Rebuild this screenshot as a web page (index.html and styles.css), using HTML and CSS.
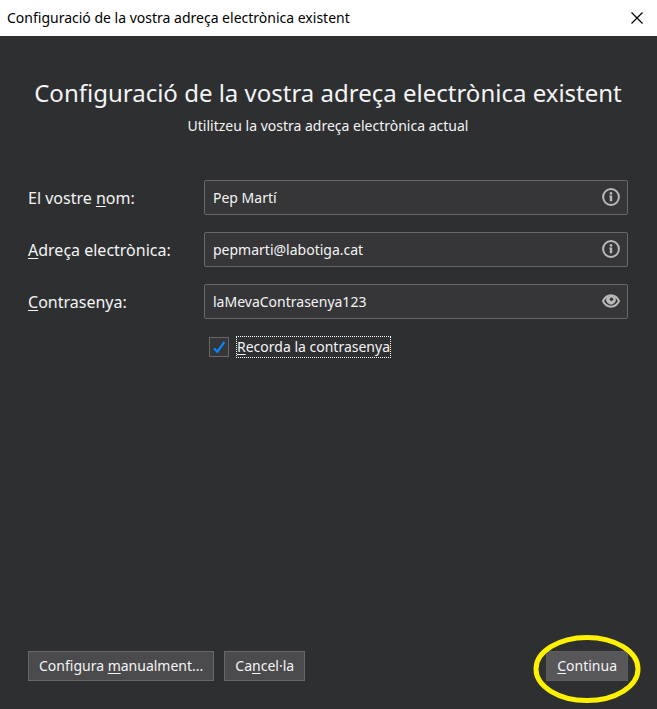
FILE: index.html
```html
<!DOCTYPE html>
<html lang="ca">
<head>
<meta charset="utf-8">
<meta name="viewport" content="width=device-width, initial-scale=1">
<title>Configuració de la vostra adreça electrònica existent</title>
<link rel="stylesheet" href="styles.css">
</head>
<body>
<header class="titlebar">
  <span>Configuració de la vostra adreça electrònica existent</span>
  <button class="close" type="button" aria-label="Tanca">
    <svg width="12" height="12" viewBox="0 0 12 12"><path d="M.5.5l11 11M11.5.5l-11 11" stroke="#000" stroke-width="1.2"/></svg>
  </button>
</header>
<main class="dialog">
  <h1>Configuració de la vostra adreça electrònica existent</h1>
  <p class="subtitle">Utilitzeu la vostra adreça electrònica actual</p>
  <form class="form" id="account">
    <label for="name">El vostre <u>n</u>om:</label>
    <div class="field">
      <input id="name" type="text" value="Pep Martí">
      <svg class="icon" viewBox="0 0 18 18"><circle cx="9" cy="9" r="7.9" fill="none" stroke="#b9b9ba" stroke-width="2"/><circle cx="9" cy="5.4" r="1.3" fill="#b9b9ba"/><path d="M7.3 7.5h2.9v5.7H7.8V8.800h-.5z" fill="#b9b9ba"/></svg>
    </div>
    <label for="email"><u>A</u>dreça electrònica:</label>
    <div class="field">
      <input id="email" type="text" value="pepmarti@labotiga.cat">
      <svg class="icon" viewBox="0 0 18 18"><circle cx="9" cy="9" r="7.9" fill="none" stroke="#b9b9ba" stroke-width="2"/><circle cx="9" cy="5.4" r="1.3" fill="#b9b9ba"/><path d="M7.3 7.5h2.9v5.7H7.8V8.800h-.5z" fill="#b9b9ba"/></svg>
    </div>
    <label for="password"><u>C</u>ontrasenya:</label>
    <div class="field">
      <input id="password" type="text" value="laMevaContrasenya123">
      <svg class="icon" viewBox="0 0 18 18"><path d="M1 9C3 5 6 3.300 9 3.300S15 5 17 9c-2 4-5 5.700-8 5.700S3 13 1 9z" fill="none" stroke="#b9b9ba" stroke-width="2" stroke-linejoin="round"/><path d="M5 5a4.800 4.800 0 1 0 8 0L9 3.500z" fill="#b9b9ba"/><circle cx="9.500" cy="7.300" r="1.700" fill="#363638"/></svg>
    </div>
    <div class="remember">
      <input id="remember" type="checkbox" checked>
      <svg class="tick" viewBox="0 0 20 20"><path d="M5 11.200l3.300 3.600L15.400 5" fill="none" stroke="#0a84ff" stroke-width="2.200"/></svg>
      <label for="remember"><u>R</u>ecorda la contrasenya</label>
    </div>
  </form>
  <footer class="actions">
    <button type="button">Configura <u>m</u>anualment...</button>
    <button type="button">Ca<u>n</u>cel·la</button>
    <div class="primary">
      <button type="submit" form="account"><u>C</u>ontinua</button>
      <svg class="ring" viewBox="0 0 108 70"><ellipse cx="54" cy="35" rx="51" ry="31.500" fill="none" stroke="#fff200" stroke-width="5"/></svg>
    </div>
  </footer>
</main>
</body>
</html>
```
FILE: styles.css
```css
* { box-sizing: border-box; }

body {
  margin: 0;
  min-height: 100vh;
  display: flex;
  flex-direction: column;
  background: #2e2f31;
  color: #f4f4f5;
  font: 14px/20px "Segoe UI", "Noto Sans", "Open Sans", sans-serif;
}

button, input { font: inherit; color: inherit; }

u { text-decoration: underline; text-decoration-thickness: 1px; text-underline-offset: 2px; }

.titlebar {
  height: 36px;
  padding-left: 7px;
  display: flex;
  align-items: center;
  justify-content: space-between;
  background: #fff;
  color: #000;
}

.close {
  width: 40px;
  height: 36px;
  padding: 0;
  border: 0;
  background: none;
  display: grid;
  place-items: center;
}

.dialog {
  flex: 1;
  display: flex;
  flex-direction: column;
  padding: 39px 29px 28px 28px;
}

h1 {
  margin: 0;
  font-size: 24px;
  line-height: 36px;
  font-weight: 400;
  text-align: center;
  white-space: nowrap;
}

.subtitle { margin: 5px 0 44px; text-align: center; }

.form {
  display: grid;
  grid-template-columns: 176px 1fr;
  row-gap: 17px;
  align-items: center;
}

.form > label { font-size: 16px; }

.field { position: relative; }

.field input {
  display: block;
  width: 100%;
  height: 35px;
  padding: 0 36px 0 8px;
  border: 1px solid #68686a;
  border-radius: 2px;
  background: #363638;
  outline: 0;
}

.icon {
  position: absolute;
  right: 8px;
  top: 8px;
  width: 18px;
  height: 18px;
}

.remember {
  grid-column: 2;
  position: relative;
  display: flex;
  align-items: center;
  gap: 7px;
  padding-left: 5px;
}

.remember input {
  appearance: none;
  width: 20px;
  height: 20px;
  margin: 0;
  border: 1px solid #68686a;
  background: #363638;
}

.tick {
  position: absolute;
  left: 5px;
  width: 20px;
  height: 20px;
  pointer-events: none;
}

.remember input:not(:checked) + .tick { display: none; }

.remember label { border: 1px dotted #fff; }

.actions {
  margin-top: auto;
  display: flex;
  gap: 10px;
}

.actions button {
  height: 30px;
  padding: 0 10px;
  border: 1px solid #68686a;
  background: #4b4b4d;
  white-space: nowrap;
  font-feature-settings: "locl" 0;
  font-variant-ligatures: none;
}

.primary { position: relative; margin-left: auto; }

.actions .primary button { background: #57575a; border-color: #5c5c5f; }

.ring {
  position: absolute;
  width: 108px;
  height: 70px;
  right: -13px;
  top: -17px;
  pointer-events: none;
}
```
